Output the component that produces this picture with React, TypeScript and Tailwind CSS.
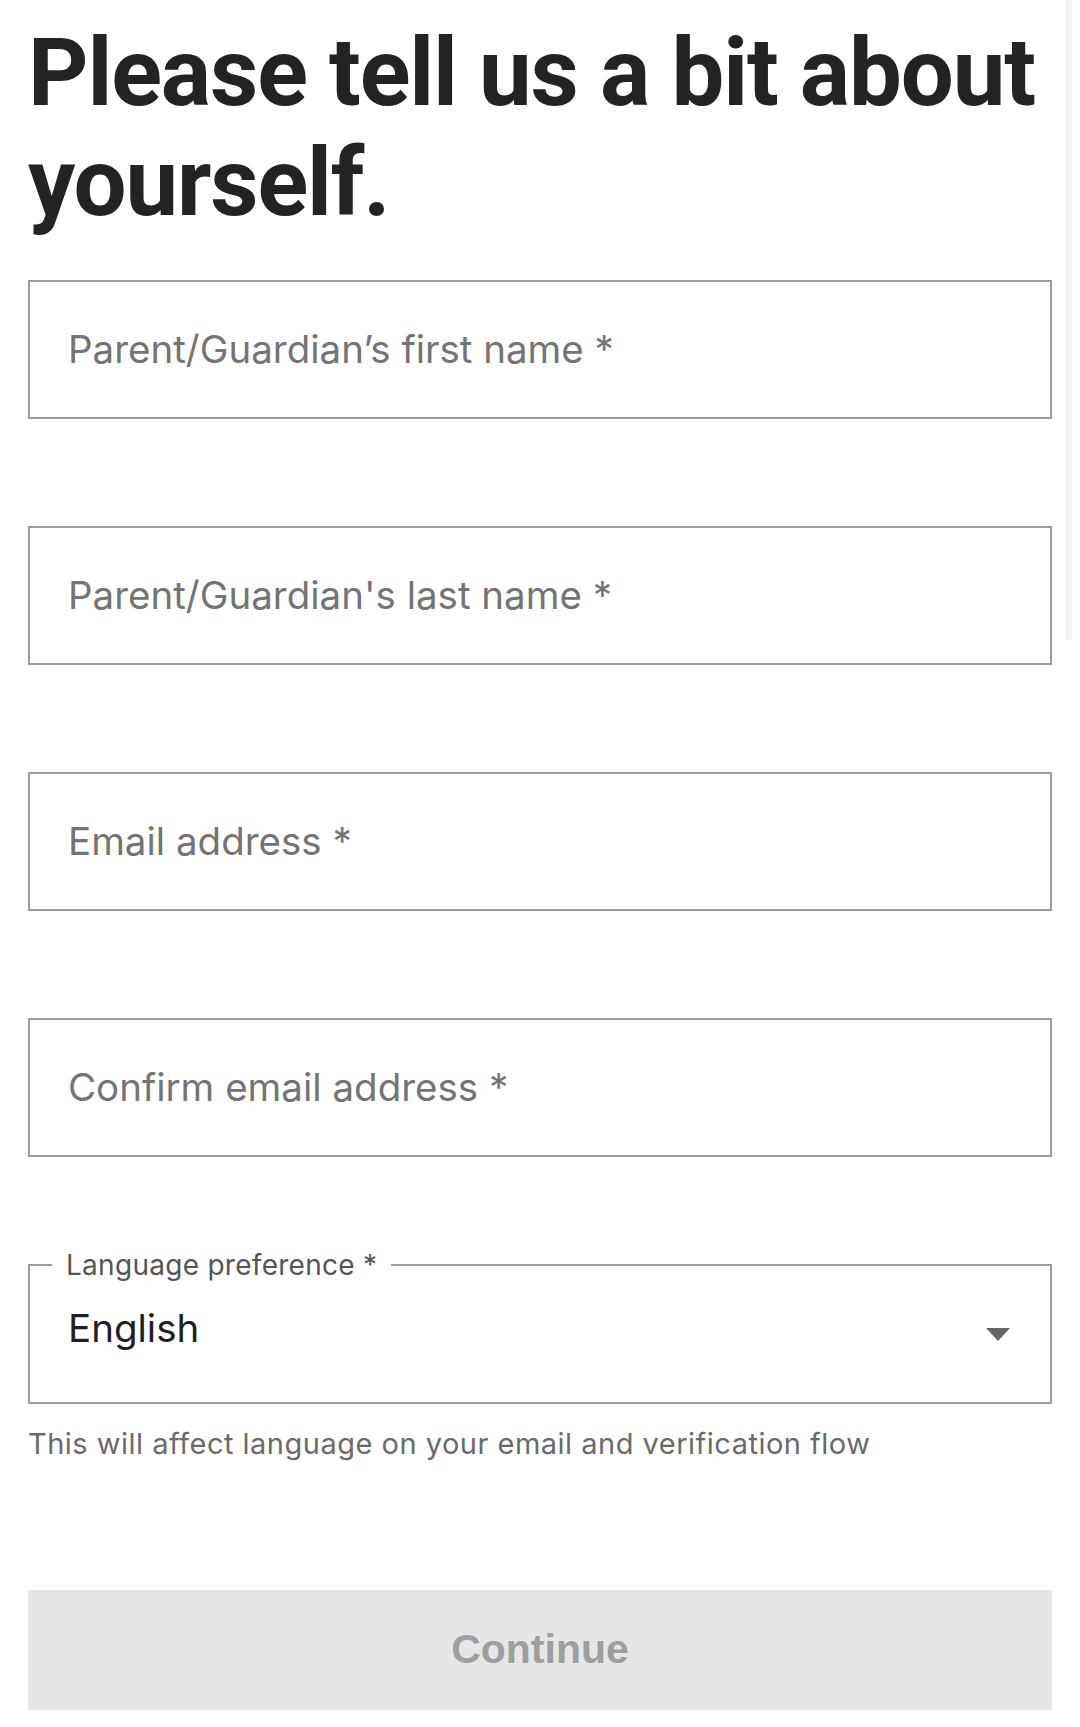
import React from "react";

const fields = [
  "Parent/Guardian\u2019s first name *",
  "Parent/Guardian's last name *",
  "Email address *",
  "Confirm email address *",
];

function TextField({ label }: { label: string }) {
  return (
    <div className="h-[139px] border-2 border-[#9c9c9c] flex items-center pl-[38px]">
      <span className="text-[38.5px] leading-none text-[#747474] font-['Inter',sans-serif]">{label}</span>
    </div>
  );
}

export default function App() {
  return (
    <div className="relative w-[1080px] h-[1727px] bg-white px-[28px] pt-[18px] overflow-hidden">
      <div className="absolute right-[8px] top-0 w-[7px] h-[640px] bg-[#f4f4f4]" />
      <h1 className="text-[94px] leading-[110px] font-bold tracking-[-0.012em] text-[#232323] font-['Roboto',sans-serif]">
        Please tell us a bit about yourself.
      </h1>
      <div className="mt-[42px] flex flex-col gap-[107px]">
        {fields.map((f) => (
          <TextField key={f} label={f} />
        ))}
        <div className="relative h-[140px] border-2 border-[#9c9c9c] flex items-center pl-[38px] pr-[38px] justify-between">
          <span className="absolute left-[22px] -top-[18px] bg-white px-[14px] text-[28px] leading-[34px] tracking-[0.01em] text-[#555] font-['Inter',sans-serif]">
            Language preference *
          </span>
          <span className="text-[38.5px] leading-none text-[#1f1f1f] font-['Inter',sans-serif] -mt-[12px]">English</span>
          <svg width="24" height="13" viewBox="0 0 24 13" className="mr-[2px]">
            <path d="M0 0 L24 0 L12 13 Z" fill="#666" />
          </svg>
        </div>
      </div>
      <p className="mt-[22px] text-[29px] leading-[36px] tracking-[0.017em] text-[#6a6a6a] font-['Inter',sans-serif]">
        This will affect language on your email and verification flow
      </p>
      <button className="mt-[128px] w-full h-[120px] bg-[#e6e6e6] flex items-center justify-center">
        <span className="text-[41px] font-bold text-[#9e9e9e] font-['Liberation_Sans',Arial,sans-serif]">Continue</span>
      </button>
    </div>
  );
}
